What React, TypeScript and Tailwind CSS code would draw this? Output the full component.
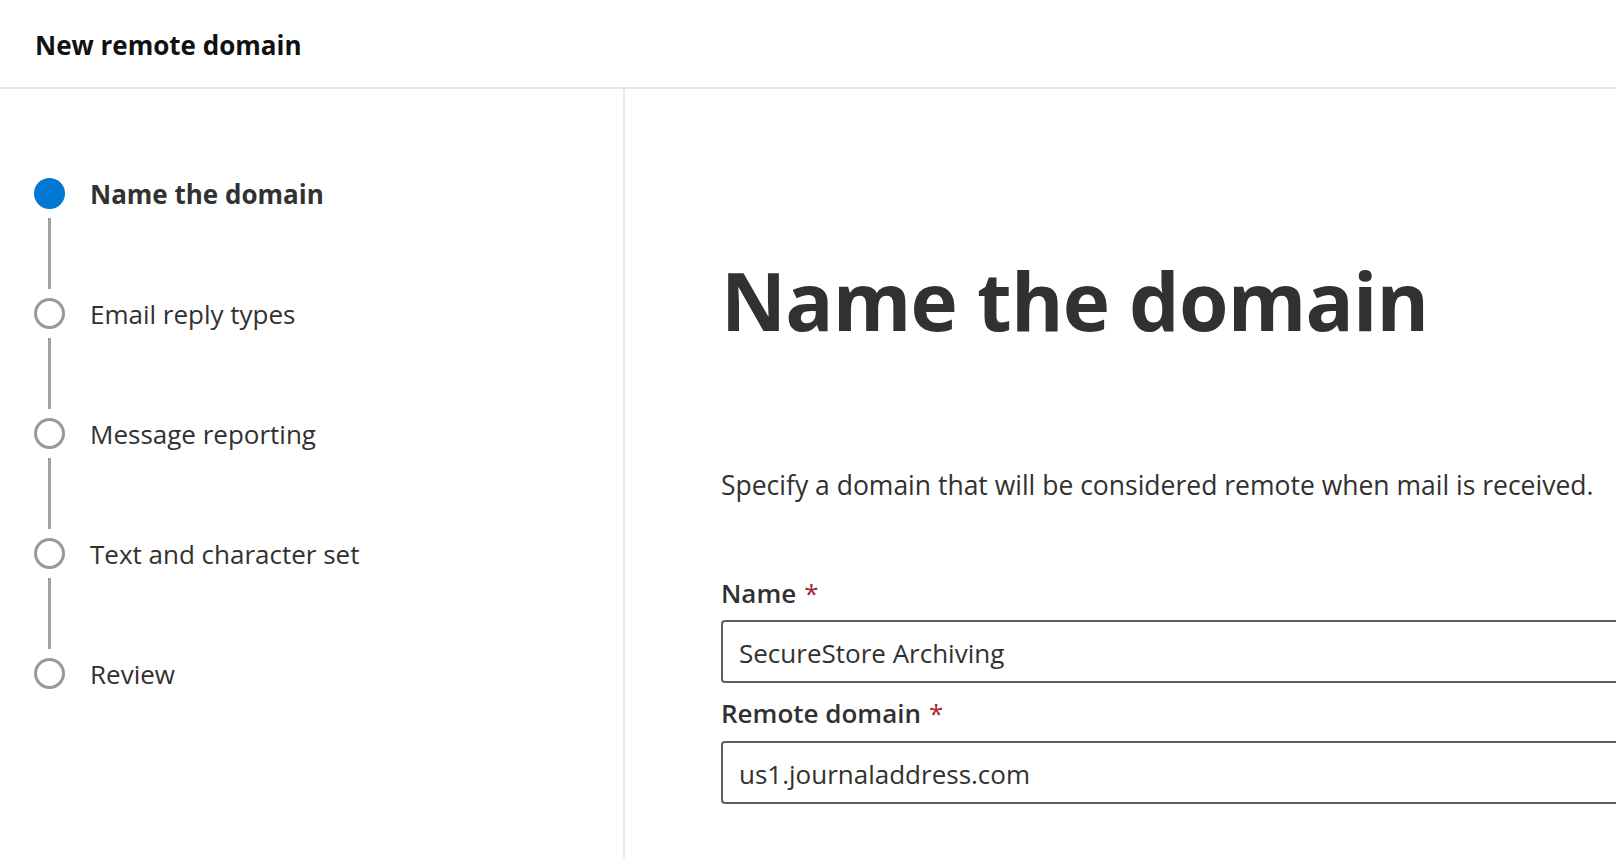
import React from "react";

const steps = [
  { label: "Name the domain", active: true },
  { label: "Email reply types", active: false },
  { label: "Message reporting", active: false },
  { label: "Text and character set", active: false },
  { label: "Review", active: false },
];

export default function App() {
  return (
    <div className="w-[1616px] h-[858px] overflow-hidden bg-white font-['Open_Sans',sans-serif] text-[#323130] flex flex-col">
      <header className="h-[89px] shrink-0 border-b-2 border-[#e8e8e8] flex items-center px-[35px] pt-[3px]">
        <h1 className="text-[26px] font-bold text-[#111111] leading-none">New remote domain</h1>
      </header>
      <div className="flex flex-1 min-h-0">
        <nav className="w-[625px] shrink-0 border-r-2 border-[#e8e8e8] pl-[34px] pt-[89px]">
          {steps.map((s, i) => (
            <div key={s.label}>
              <div className="flex items-center h-[31px]">
                {s.active ? (
                  <div className="w-[31px] h-[31px] rounded-full bg-[#0078d4] shrink-0" />
                ) : (
                  <div className="w-[31px] h-[31px] rounded-full border-[3px] border-[#999999] bg-white shrink-0" />
                )}
                <span
                  className={
                    "ml-[25px] text-[26px] leading-[31px] whitespace-nowrap pt-[1px] " +
                    (s.active ? "font-bold" : "font-normal")
                  }
                >
                  {s.label}
                </span>
              </div>
              {i < steps.length - 1 && (
                <div className="w-[31px] flex justify-center pt-[9px] pb-[9px]">
                  <div className="w-[3px] h-[71px] bg-[#a0a0a0]" />
                </div>
              )}
            </div>
          ))}
        </nav>
        <main className="flex-1 min-w-0 overflow-hidden pl-[96px] pt-[171px]">
          <h2 className="text-[80px] leading-[80px] font-bold tracking-[-0.8px] whitespace-nowrap">
            Name the domain
          </h2>
          <p className="mt-[127px] text-[26.5px] leading-[36px] whitespace-nowrap">
            Specify a domain that will be considered remote when mail is received.
          </p>
          <div className="mt-[72px]">
            <label className="block text-[26px] leading-[36px] font-semibold whitespace-nowrap">
              Name<span className="text-[#a4262c] font-normal pl-[8px]">*</span>
            </label>
            <div className="mt-[9px] w-[1000px] h-[63px] border-2 border-[#605e5c] rounded-[4px] flex items-center pl-[16px] pt-[2px]">
              <span className="text-[26px] leading-[36px] whitespace-nowrap">SecureStore Archiving</span>
            </div>
            <label className="block mt-[12px] text-[26px] leading-[36px] font-semibold whitespace-nowrap">
              Remote domain<span className="text-[#a4262c] font-normal pl-[8px]">*</span>
            </label>
            <div className="mt-[10px] w-[1000px] h-[63px] border-2 border-[#605e5c] rounded-[4px] flex items-center pl-[16px] pt-[2px]">
              <span className="text-[26px] leading-[36px] whitespace-nowrap">us1.journaladdress.com</span>
            </div>
          </div>
        </main>
      </div>
    </div>
  );
}
